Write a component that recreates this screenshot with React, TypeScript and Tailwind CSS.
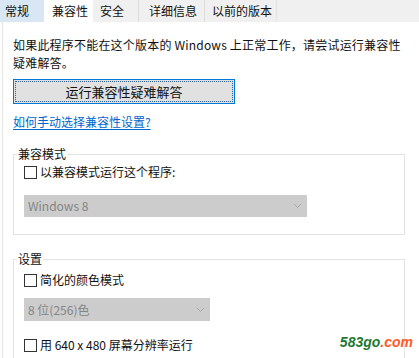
import React from "react";

const FONT = { fontFamily: '"Noto Sans CJK SC", "Noto Sans", sans-serif' };

function CheckRow({ label, className = "" }: { label: string; className?: string }) {
  return (
    <div className={"flex items-center h-[18px] ml-[10px] " + className}>
      <span className="w-[13px] h-[13px] border border-[#333333] bg-white shrink-0" />
      <span className="ml-[3px] text-[12px] leading-[18px] text-[#111111]">{label}</span>
    </div>
  );
}

function Dropdown({ value, w, h, className = "" }: { value: string; w: string; h: string; className?: string }) {
  return (
    <div className={"ml-[10px] flex items-center justify-between bg-[#cccccc] " + w + " " + h + " " + className}>
      <span className="pl-[4px] text-[12px] text-[#858585]">{value}</span>
      <svg width="9" height="6" viewBox="0 0 9 6" className="mr-[5px]">
        <path d="M1 1 L4.5 4.5 L8 1" fill="none" stroke="#a8a8a8" strokeWidth="1" />
      </svg>
    </div>
  );
}

export default function App() {
  return (
    <div className="w-[419px] h-[358px] overflow-hidden bg-white relative" style={FONT}>
      <div className="flex h-[22px] bg-[#f0f0f0] text-[12px] leading-[22px] text-[#111111]">
        <div className="w-[44px] pl-[5px] bg-[#d9e7f4]">常规</div>
        <div className="w-[49px] pl-[8px] bg-white">兼容性</div>
        <div className="w-[46px] pl-[7px] border-r border-[#dcdcdc]">安全</div>
        <div className="w-[66px] pl-[10px] border-r border-[#dcdcdc]">详细信息</div>
        <div className="w-[72px] pl-[7px] border-r border-[#e3e3e3]">以前的版本</div>
        <div className="flex-1" />
      </div>
      <div className="ml-[2px] border-l border-[#e4e4e4] h-[336px] pl-[10px] pt-[14px] pr-[14px]">
        <div className="text-[12px] leading-[18px] text-[#111111] tracking-[0.2px]">
          如果此程序不能在这个版本的 Windows 上正常工作，请尝试运行兼容性
          <br />
          疑难解答。
        </div>
        <div className="mt-[7px] w-[222px] h-[25px] border border-[#0078d7] bg-[#e1e1e1] p-[1px]">
          <div className="h-full border border-dotted border-[#2a5d99] flex items-center justify-center text-[13px] text-[#111111]">
            运行兼容性疑难解答
          </div>
        </div>
        <div className="mt-[9px] text-[12px] leading-[18px] text-[#0066cc] underline underline-offset-2">
          如何手动选择兼容性设置?
        </div>
        <fieldset className="mt-[16px] w-[392px] border border-[#e2e2e2] pb-[17px]">
          <legend className="ml-[3px] px-[1px] text-[12px] leading-[14px] text-[#111111]">兼容模式</legend>
          <CheckRow label="以兼容模式运行这个程序:" className="mt-[2px]" />
          <Dropdown value="Windows 8" w="w-[283px]" h="h-[22px]" className="mt-[14px]" />
        </fieldset>
        <fieldset className="mt-[17px] w-[392px] border border-[#e2e2e2] pb-[20px]">
          <legend className="ml-[3px] px-[1px] text-[12px] leading-[14px] text-[#111111]">设置</legend>
          <CheckRow label="简化的颜色模式" className="mt-[5px]" />
          <Dropdown value="8 位(256)色" w="w-[186px]" h="h-[23px]" className="mt-[9px]" />
          <CheckRow label="用 640 x 480 屏幕分辨率运行" className="mt-[15px]" />
        </fieldset>
      </div>
      <div
        className="absolute right-[6px] bottom-[8px] text-[14px] font-bold italic leading-[16px]"
        style={{ fontFamily: '"Liberation Sans", Arial, sans-serif' }}
      >
        <span className="text-[#1d7a33]">583go</span>
        <span className="text-[#ff5a26]">.com</span>
      </div>
    </div>
  );
}
